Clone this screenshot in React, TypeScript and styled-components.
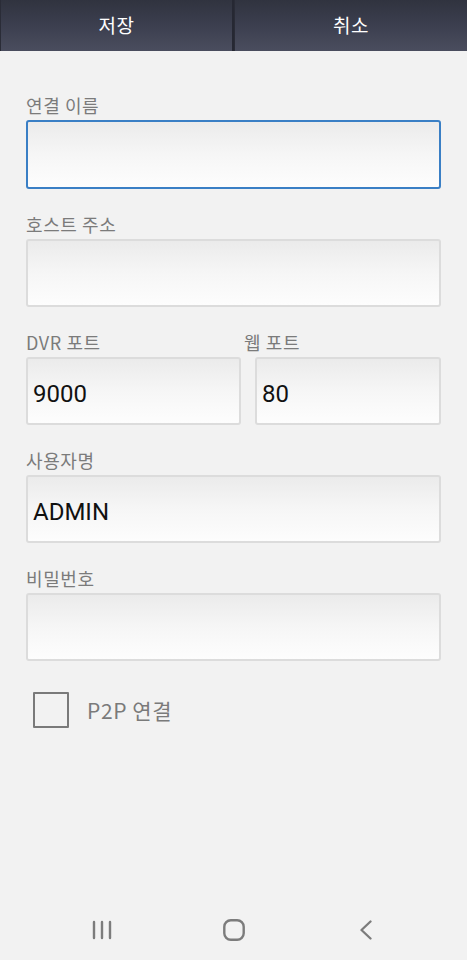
import React from "react";
import styled, { createGlobalStyle } from "styled-components";

const GlobalStyle = createGlobalStyle`
  html, body {
    margin: 0;
    padding: 0;
    background: #f2f2f2;
  }
  #root {
    min-height: 100vh;
  }
  * { box-sizing: border-box; }
`;

const Page = styled.div`
  min-height: 100vh;
  display: flex;
  flex-direction: column;
  background: #f2f2f2;
  font-family: "Noto Sans CJK KR", "Noto Sans", sans-serif;
`;

const Header = styled.div`
  display: grid;
  grid-template-columns: 232px 1fr;
  column-gap: 2px;
  height: 51px;
  background: #262833;
`;

const HeaderButton = styled.button`
  display: flex;
  align-items: center;
  justify-content: center;
  border: none;
  border-left: 1px solid #2a2c37;
  margin: 0;
  padding: 0 0 2px;
  background: linear-gradient(to bottom, #30333f 0%, #3c3f4f 50%, #4a4d5e 100%);
  color: #ffffff;
  font-family: "Noto Sans CJK KR", "Noto Sans", sans-serif;
  font-size: 19px;
  font-weight: 400;
  letter-spacing: 0.5px;
`;

const Form = styled.div`
  flex: 1;
  display: flex;
  flex-direction: column;
  gap: 25px;
  padding: 44px 26px 0;
`;

const Field = styled.div`
  display: flex;
  flex-direction: column;
  gap: 5px;
  min-width: 0;
`;

const Label = styled.label`
  font-size: 18px;
  line-height: 20px;
  letter-spacing: 0.6px;
  color: #7b7b7b;
  white-space: nowrap;
`;

const TextBox = styled.input<{ $focused?: boolean; $indent?: number }>`
  display: block;
  width: ${(p) => (p.$indent ? `calc(100% - ${p.$indent}px)` : "100%")};
  margin-left: ${(p) => p.$indent ?? 0}px;
  height: ${(p) => (p.$focused ? 69 : 68)}px;
  border: 2px solid ${(p) => (p.$focused ? "#3a7fc5" : "#dcdcdc")};
  border-radius: 3px;
  background: linear-gradient(to bottom, #ebebeb 0%, #f6f6f6 50%, #fdfdfd 100%);
  padding: 5px 0 0 5px;
  font-family: Roboto, "Noto Sans", sans-serif;
  font-size: 24px;
  font-weight: 400;
  color: #111111;
  outline: none;
`;

const PortRow = styled.div`
  display: grid;
  grid-template-columns: 215px 1fr;
  column-gap: 3px;
`;

const CheckRow = styled.div`
  display: flex;
  align-items: center;
  gap: 18px;
  margin-top: 6px;
  padding-left: 7px;
`;

const CheckBox = styled.div`
  width: 36px;
  height: 36px;
  border: 2px solid #7a7a7a;
  border-radius: 1px;
`;

const CheckLabel = styled.span`
  font-size: 21px;
  line-height: 24px;
  letter-spacing: 0.6px;
  color: #7a7a7a;
`;

const NavBar = styled.div`
  height: 60px;
  display: grid;
  grid-template-columns: repeat(3, 132px);
  justify-content: center;
  align-items: center;
  justify-items: center;
`;

const NavIcon = styled.svg`
  display: block;
  color: #7c7c7c;
`;

export default function App() {
  return (
    <>
      <GlobalStyle />
      <Page>
        <Header>
          <HeaderButton>저장</HeaderButton>
          <HeaderButton>취소</HeaderButton>
        </Header>
        <Form>
          <Field>
            <Label>연결 이름</Label>
            <TextBox $focused defaultValue="" />
          </Field>
          <Field>
            <Label>호스트 주소</Label>
            <TextBox defaultValue="" />
          </Field>
          <PortRow>
            <Field>
              <Label>DVR 포트</Label>
              <TextBox defaultValue="9000" />
            </Field>
            <Field>
              <Label>웹 포트</Label>
              <TextBox $indent={11} defaultValue="80" />
            </Field>
          </PortRow>
          <Field>
            <Label>사용자명</Label>
            <TextBox defaultValue="ADMIN" />
          </Field>
          <Field>
            <Label>비밀번호</Label>
            <TextBox type="password" defaultValue="" />
          </Field>
          <CheckRow>
            <CheckBox />
            <CheckLabel>P2P 연결</CheckLabel>
          </CheckRow>
        </Form>
        <NavBar>
          <NavIcon width="20" height="20" viewBox="0 0 20 20">
            <g stroke="currentColor" strokeWidth="2.4" strokeLinecap="round">
              <line x1="2" y1="2" x2="2" y2="18" />
              <line x1="10" y1="2" x2="10" y2="18" />
              <line x1="18" y1="2" x2="18" y2="18" />
            </g>
          </NavIcon>
          <NavIcon width="22" height="22" viewBox="0 0 22 22">
            <rect x="1.3" y="1.3" width="19.4" height="19.4" rx="6.5" fill="none" stroke="currentColor" strokeWidth="2.4" />
          </NavIcon>
          <NavIcon width="14" height="20" viewBox="0 0 14 20">
            <polyline points="11.5,1.5 2.5,10 11.5,18.5" fill="none" stroke="currentColor" strokeWidth="2.3" strokeLinecap="round" strokeLinejoin="round" />
          </NavIcon>
        </NavBar>
      </Page>
    </>
  );
}
